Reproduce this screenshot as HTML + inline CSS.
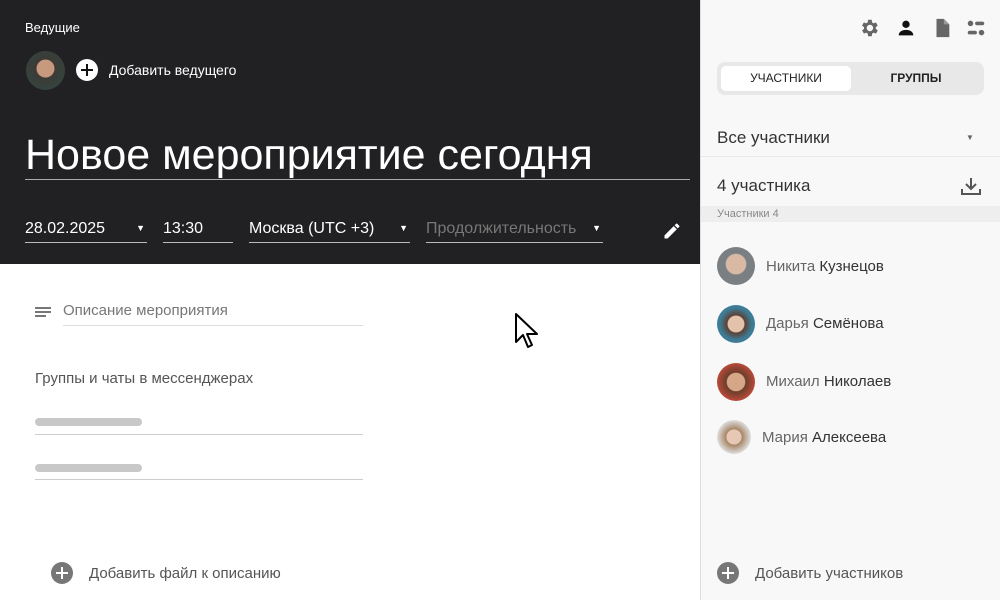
<!DOCTYPE html>
<html><head><meta charset="utf-8"><style>
*{box-sizing:border-box;margin:0;padding:0}
body{width:1000px;height:600px;overflow:hidden;background:#fff;font-family:"Liberation Sans","Noto Sans CJK SC",sans-serif;position:relative}
.a{position:absolute}
.dark{left:0;top:0;width:700px;height:264px;background:#212123}
.w{color:#fff}
.side{left:700px;top:0;width:300px;height:600px;background:#f8f8f8;border-left:1px solid #ddd}
.field{border-bottom:1px solid #bbb;height:30px}
.av{width:34px;height:34px;border-radius:50%}
.name{font-size:15px;color:#666}
.name b{color:#333;font-weight:normal}
</style></head><body>
<div class="a dark"></div>
<div class="a w" style="left:25px;top:20px;font-size:13px">Ведущие</div>
<div class="a" style="left:26px;top:51px;width:39px;height:39px;border-radius:50%;background:radial-gradient(circle at 50% 45%,#c79a80 0 30%,#3d3a35 32%,#2f4a45 100%)"></div>
<div class="a" style="left:76px;top:59px;width:22px;height:22px;border-radius:50%;background:#fff"></div>
<div class="a" style="left:81px;top:69px;width:12px;height:2px;background:#111"></div>
<div class="a" style="left:86px;top:64px;width:2px;height:12px;background:#111"></div>
<div class="a w" style="left:109px;top:62px;font-size:14px">Добавить ведущего</div>
<div class="a w" style="left:25px;top:130px;font-size:43px;line-height:50px">Новое мероприятие сегодня</div>
<div class="a" style="left:25px;top:179px;width:665px;height:1px;background:#aaa"></div>
<div class="a field w" style="left:25px;top:213px;width:122px;font-size:16px;padding-top:7px">28.02.2025<span style="position:absolute;right:2px;top:10px;font-size:9px">▼</span></div>
<div class="a field w" style="left:163px;top:213px;width:70px;font-size:16px;padding-top:7px">13:30</div>
<div class="a field w" style="left:249px;top:213px;width:161px;font-size:16px;padding-top:7px">Москва (UTC +3)<span style="position:absolute;right:2px;top:10px;font-size:9px">▼</span></div>
<div class="a field" style="left:426px;top:213px;width:177px;font-size:16px;padding-top:7px;color:#777">Продолжительность<span style="position:absolute;right:2px;top:10px;font-size:9px;color:#fff">▼</span></div>
<svg class="a" style="left:662px;top:221px" width="20" height="20" viewBox="0 0 24 24"><path fill="#fff" d="M3 17.25V21h3.75L17.8 9.94l-3.75-3.75L3 17.25zM20.7 7.04a1 1 0 000-1.41l-2.34-2.34a1 1 0 00-1.41 0l-1.830 1.83 3.75 3.75 1.83-1.83z"/></svg>
<svg class="a" style="left:35px;top:306px" width="18" height="14"><rect y="1" width="16" height="2" fill="#777"/><rect y="5" width="16" height="2" fill="#777"/><rect y="9" width="11" height="2" fill="#777"/></svg>
<div class="a" style="left:63px;top:302px;width:300px;height:24px;border-bottom:1px solid #ddd;font-size:15px;color:#777">Описание мероприятия</div>
<svg class="a" style="left:514px;top:312px" width="30" height="42" viewBox="0 0 30 42"><path d="M2 2 L2 30 L9 23 L14 35 L18 33 L13 22 L23 22 Z" fill="#fff" stroke="#000" stroke-width="2" stroke-linejoin="round"/></svg>
<div class="a" style="left:35px;top:370px;font-size:15px;color:#555">Группы и чаты в мессенджерах</div>
<div class="a" style="left:35px;top:418px;width:107px;height:8px;border-radius:4px;background:#c8c8c8"></div>
<div class="a" style="left:35px;top:434px;width:328px;height:1px;background:#ccc"></div>
<div class="a" style="left:35px;top:464px;width:107px;height:8px;border-radius:4px;background:#c8c8c8"></div>
<div class="a" style="left:35px;top:479px;width:328px;height:1px;background:#ccc"></div>
<div class="a" style="left:51px;top:562px;width:22px;height:22px;border-radius:50%;background:#777"></div>
<div class="a" style="left:56px;top:572px;width:12px;height:2px;background:#fff"></div>
<div class="a" style="left:61px;top:567px;width:2px;height:12px;background:#fff"></div>
<div class="a" style="left:89px;top:565px;font-size:15px;color:#555">Добавить файл к описанию</div>

<div class="a side"></div>
<svg class="a" style="left:858px;top:17px" width="22" height="22" viewBox="0 0 24 24"><path fill="#666" d="M19.4 13a7.5 7.5 0 000-2l2.1-1.6-2-3.5-2.5 1a7 7 0 00-1.7-1L15 3h-4l-.4 2.9a7 7 0 00-1.7 1l-2.5-1-2 3.5L6.6 11a7.5 7.5 0 000 2l-2.1 1.6 2 3.5 2.5-1a7 7 0 001.7 1L11 21h4l.4-2.9a7 7 0 001.7-1l2.5 1 2-3.5zM13 15.5A3.5 3.5 0 1113 8.5a3.5 3.5 0 010 7z"/></svg>
<svg class="a" style="left:895px;top:17px" width="22" height="22" viewBox="0 0 24 24"><circle cx="12" cy="8" r="4" fill="#111"/><path fill="#111" d="M4 20c0-4 4-6 8-6s8 2 8 6z"/></svg>
<svg class="a" style="left:931px;top:17px" width="22" height="22" viewBox="0 0 24 24"><path fill="#666" d="M6 2h8l6 6v14H6z"/><path fill="#999" d="M14 2v6h6z"/></svg>
<svg class="a" style="left:965px;top:17px" width="22" height="22" viewBox="0 0 24 24"><circle cx="6" cy="7" r="3" fill="#666"/><rect x="11" y="5" width="10" height="4" rx="2" fill="#666"/><circle cx="18" cy="17" r="3" fill="#666"/><rect x="3" y="15" width="10" height="4" rx="2" fill="#666"/></svg>
<div class="a" style="left:717px;top:62px;width:267px;height:33px;background:#e8e8e8;border-radius:8px"></div>
<div class="a" style="left:721px;top:66px;width:130px;height:25px;background:#fff;border-radius:5px;font-size:12px;color:#222;text-align:center;line-height:25px">УЧАСТНИКИ</div>
<div class="a" style="left:851px;top:66px;width:130px;height:25px;font-size:12px;color:#222;text-align:center;line-height:25px;font-weight:bold">ГРУППЫ</div>
<div class="a" style="left:717px;top:128px;font-size:17px;color:#333">Все участники</div>
<div class="a" style="left:966px;top:133px;font-size:8px;color:#666">▼</div>
<div class="a" style="left:701px;top:156px;width:299px;height:1px;background:#e8e8e8"></div>
<div class="a" style="left:717px;top:176px;font-size:17px;color:#333">4 участника</div>
<svg class="a" style="left:960px;top:176px" width="22" height="20" viewBox="0 0 22 20"><path d="M11 2v11M6 8l5 5 5-5M2 13v5h18v-5" fill="none" stroke="#555" stroke-width="2"/></svg>
<div class="a" style="left:701px;top:206px;width:299px;height:16px;background:#eeeeee;font-size:11px;color:#888;padding-left:16px;line-height:16px">Участники 4</div>
<div class="a av" style="left:717px;top:247px;width:38px;height:38px;background:radial-gradient(circle at 50% 45%,#d8b9a4 0 35%,#7a7f84 38%)"></div>
<div class="a name" style="left:766px;top:258px">Никита <b>Кузнецов</b></div>
<div class="a av" style="left:717px;top:305px;width:38px;height:38px;background:radial-gradient(circle at 50% 50%,#e2c2aa 0 30%,#5a4134 33%,#3d7c96 60%)"></div>
<div class="a name" style="left:766px;top:315px">Дарья <b>Семёнова</b></div>
<div class="a av" style="left:717px;top:363px;width:38px;height:38px;background:radial-gradient(circle at 50% 50%,#d7a688 0 33%,#6b3d2a 36%,#b84a3a 70%)"></div>
<div class="a name" style="left:766px;top:373px">Михаил <b>Николаев</b></div>
<div class="a av" style="left:717px;top:420px;background:radial-gradient(circle at 50% 50%,#e6c8b4 0 30%,#a78565 33%,#ddd 70%)"></div>
<div class="a name" style="left:762px;top:429px">Мария <b>Алексеева</b></div>
<div class="a" style="left:717px;top:562px;width:22px;height:22px;border-radius:50%;background:#777"></div>
<div class="a" style="left:722px;top:572px;width:12px;height:2px;background:#fff"></div>
<div class="a" style="left:727px;top:567px;width:2px;height:12px;background:#fff"></div>
<div class="a" style="left:755px;top:565px;font-size:15px;color:#555">Добавить участников</div>
</body></html>
